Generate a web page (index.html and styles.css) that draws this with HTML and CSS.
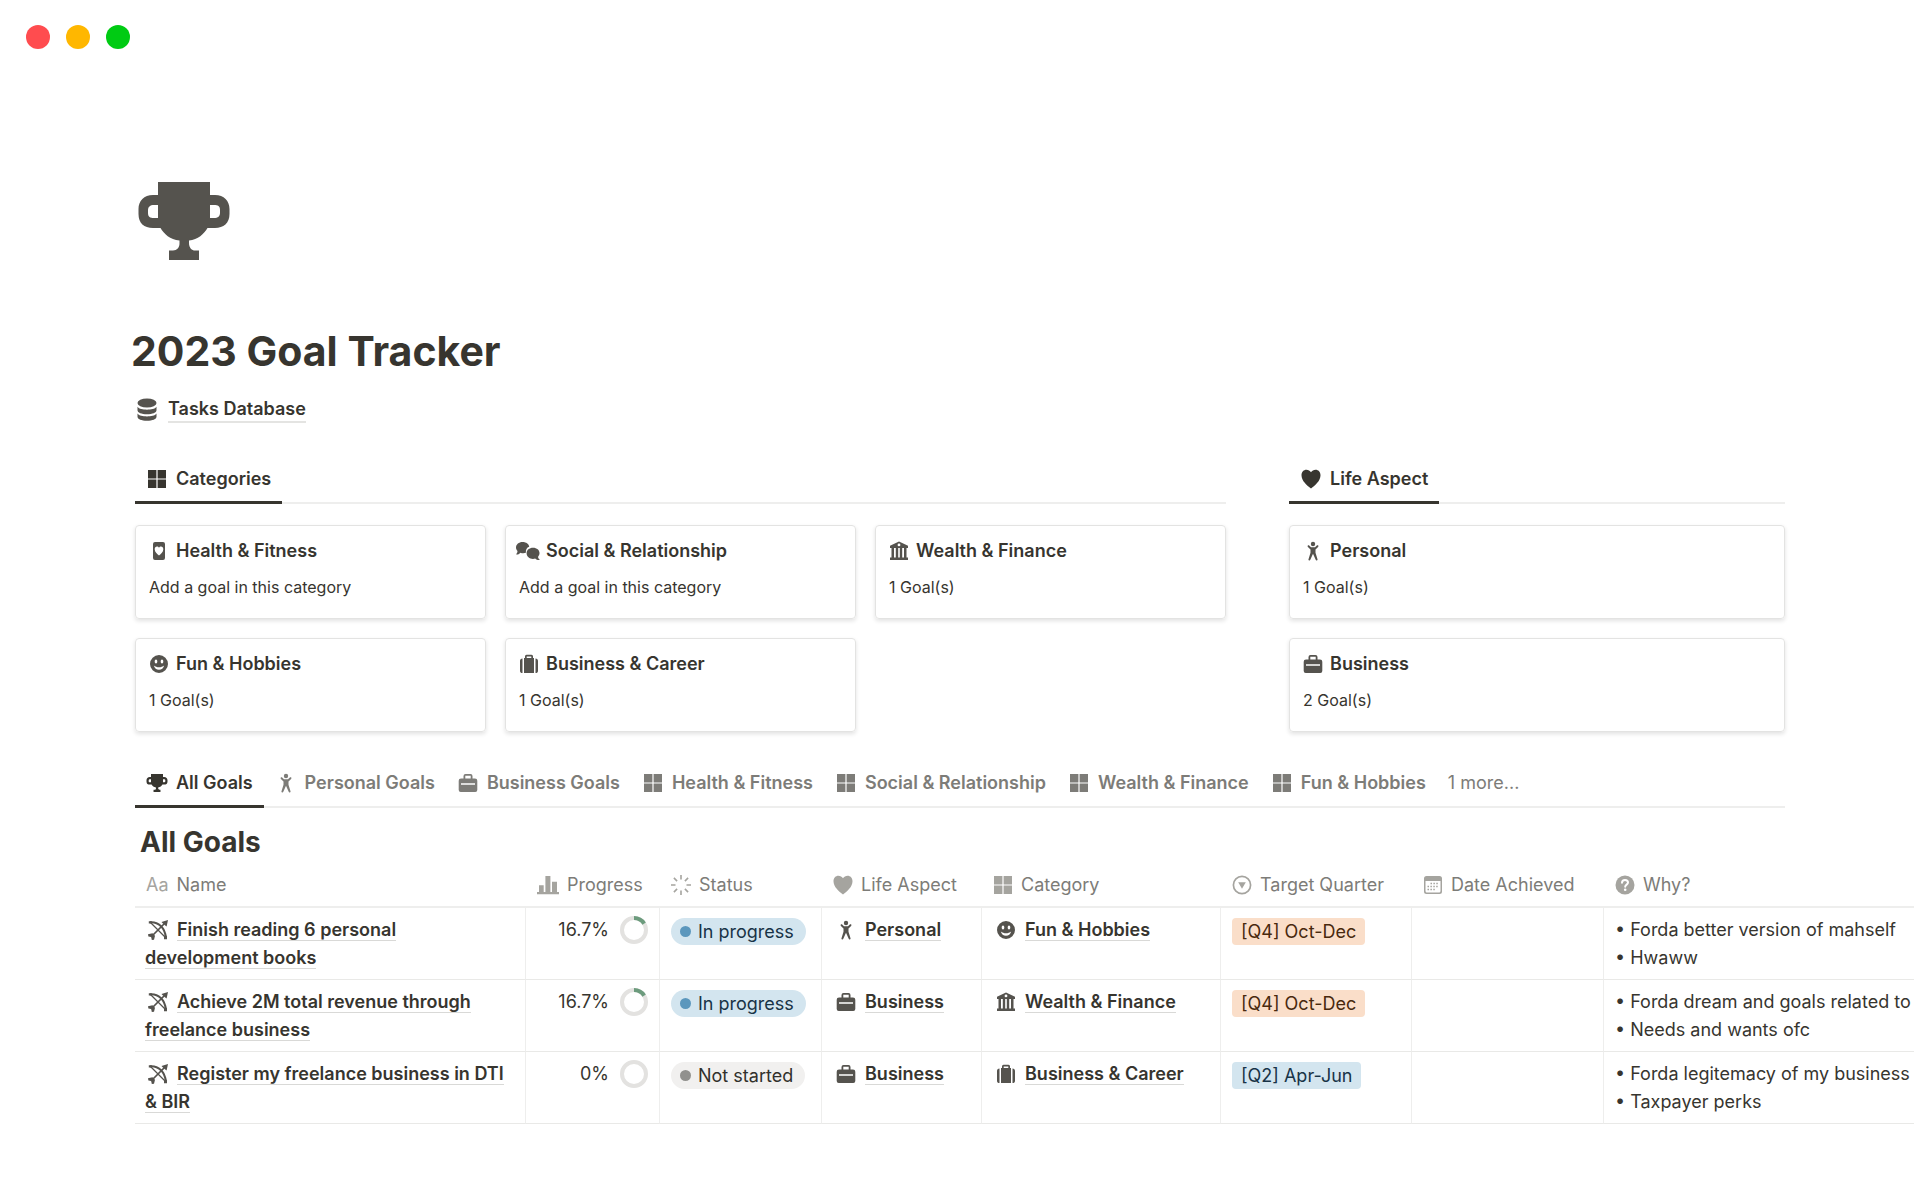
FILE: index.html
```html
<!DOCTYPE html>
<html lang="en">
<head>
  <meta charset="UTF-8" />
  <meta name="viewport" content="width=device-width, initial-scale=1.0"/>
  <title>2023 Goal Tracker</title>
  <link rel="stylesheet" href="styles.css">
</head>
<body>

<!-- Icon set -->
<svg class="sprite" aria-hidden="true">
  <symbol id="trophy" viewBox="0 0 104 104">
    <path fill-rule="evenodd" d="M26 13H78V26H83c9 0 14.500 6 14.500 14V45c0 9-6 14-14.500 14H75.500C72 65 66 70.500 57 71.500V74c0 5 3 7.500 6 7.500h4V91H37V81.500h4c4 0 6.500-3 6.500-7v-3C38 70.500 32 65 28.500 59H21C12 59 6.500 54 6.500 45V40C6.500 32 12 26 21 26H26ZM26 36H22c-4 0-6 2-6 5v3c0 4 2 5 6 5h4ZM78 36v13h4c4 0 6-2 6-5v-3c0-4-2-5-6-5Z"/>
  </symbol>
  <symbol id="database" viewBox="0 0 20 24">
    <ellipse cx="10" cy="5" rx="9.500" ry="4.500"/>
    <path d="M.5 8.800C2 11 6 11.700 10 11.700s8-.7 9.500-2.900v3.400c0 2.400-4 4-9.500 4s-9.500-1.600-9.500-4ZM.5 15.500c1.500 2.200 5.500 2.900 9.500 2.900s8-.7 9.500-2.900v3.200c0 2.400-4 4-9.500 4s-9.500-1.600-9.500-4Z"/>
  </symbol>
  <symbol id="grid" viewBox="0 0 20 20">
    <path d="M1 1h8.400v8.400H1ZM10.600 1H19v8.400h-8.400ZM1 10.600h8.400V19H1ZM10.600 10.600H19V19h-8.400Z"/>
  </symbol>
  <symbol id="heart" viewBox="0 0 20 20">
    <path d="M10 19.500C6 16.500.5 12 .5 6.300.5 3 2.700.8 5.400.8 7.300.8 9 1.700 10 3.300 11 1.700 12.700.8 14.600.8c2.700 0 4.900 2.200 4.900 5.500 0 5.700-5.500 10.200-9.500 13.200Z"/>
  </symbol>
  <symbol id="health" viewBox="0 0 20 20">
    <path fill-rule="evenodd" d="M6 1h8a2 2 0 0 1 2 2v14a2 2 0 0 1-2 2H6a2 2 0 0 1-2-2V3a2 2 0 0 1 2-2Zm4 13.600c2-1.600 4.300-3.700 4.300-6.400C14.300 6.600 13.300 5.500 12 5.500c-.8 0-1.600.4-2 1.200-.4-.8-1.200-1.200-2-1.200-1.300 0-2.300 1.100-2.300 2.700 0 2.700 2.300 4.800 4.300 6.400Z"/>
  </symbol>
  <symbol id="chat" viewBox="0 0 24 20">
    <path d="M6.500 1C10.400 1 13 3.200 13.200 5.700 10.700 6.500 9.600 8.700 9.900 11.800c-1.700.6-3.800.6-5.400-.1C3.300 13 2 13.500.7 13.600c-.6 0-.5-.5-.2-.8.700-.8 1-1.700 1-2.700C.5 9 0 7.900 0 6.600 0 3.400 2.900 1 6.500 1Z"/>
    <path d="M17 6.800c3.900 0 6.500 2.300 6.500 5.300 0 1.500-.5 2.600-1.400 3.600 0 1 .4 1.900 1.300 2.600.3.300.3.700-.2.800-1.500.1-2.800-.4-4-1.500-.7.200-1.400.3-2.200.3-3.600 0-6.400-2.400-6.400-5.700 0-3 2.700-5.400 6.400-5.400Z"/>
  </symbol>
  <symbol id="bank" viewBox="0 0 20 20">
    <path fill-rule="evenodd" d="M10 .5 19 4.800V7h-1.500v9.500H19V19H1v-2.500h1.500V7H1V4.800ZM10 2.500a1.400 1.400 0 1 0 0 2.800 1.400 1.400 0 0 0 0-2.800ZM5 7v9.500h1.800V7ZM9.200 7v9.500h1.600V7ZM13.200 7v9.500H15V7Z"/>
  </symbol>
  <symbol id="smile" viewBox="0 0 20 20">
    <path fill-rule="evenodd" d="M10 1a9 9 0 1 1 0 18 9 9 0 0 1 0-18ZM7 5.500c-.8 0-1.300.9-1.300 2s.5 2 1.300 2 1.300-.9 1.300-2-.5-2-1.300-2Zm6 0c-.8 0-1.300.9-1.300 2s.5 2 1.300 2 1.300-.9 1.300-2-.5-2-1.300-2ZM4.800 11.500c.7 2.700 2.700 4.300 5.200 4.300s4.500-1.600 5.200-4.300c-1.500 1.200-3.300 1.800-5.200 1.800s-3.700-.6-5.200-1.800Z"/>
  </symbol>
  <symbol id="suitcase" viewBox="0 0 20 20">
    <path fill-rule="evenodd" d="M7.500.8h5a1.500 1.500 0 0 1 1.500 1.500V4h1v15H5V4h1V2.300A1.500 1.500 0 0 1 7.500.8Zm.2 1.700V4h4.600V2.500Z"/>
    <path d="M3.500 4.500V19C1.800 19 1 18.200 1 16.700V7c0-1.600.8-2.500 2.500-2.500ZM16.500 4.500c1.700 0 2.500.9 2.500 2.500v9.700c0 1.500-.8 2.300-2.500 2.300Z"/>
  </symbol>
  <symbol id="briefcase" viewBox="0 0 20 20">
    <path fill-rule="evenodd" d="M7.500 1h5A2 2 0 0 1 14.500 3v2.500H17A2.300 2.300 0 0 1 19.300 7.800V17a2 2 0 0 1-2 2H2.700a2 2 0 0 1-2-2V7.800A2.300 2.300 0 0 1 3 5.500h2.500V3a2 2 0 0 1 2-2ZM7.300 2.800v2.700h5.400V2.800ZM3 10.300v1.400h14v-1.400Z"/>
  </symbol>
  <symbol id="person" viewBox="0 0 20 20">
    <circle cx="10" cy="3" r="2.200"/>
    <path d="M4.800 4.500c.4-.4 1-.3 1.400.1L8 6.200h4l1.800-1.600c.4-.4 1-.5 1.400-.1s.3 1-.1 1.400L12.500 8.500v3.300l2 6.400c.2.600-.1 1-.6 1.200-.6.100-1-.1-1.200-.6L10 12.800l-2.700 6c-.2.500-.6.700-1.200.6-.5-.2-.8-.6-.6-1.200l2-6.400V8.500L4.900 5.900c-.4-.4-.5-1-.1-1.400Z"/>
  </symbol>
  <symbol id="bow" viewBox="0 0 20 20">
    <path d="M2 2.200c8.500-.8 15 5.800 15.800 15" fill="none" stroke="currentColor" stroke-width="2"/>
    <path d="M2.500 2.500 17.500 17.500" fill="none" stroke="currentColor" stroke-width="1.300"/>
    <path d="M3 17 16 4" stroke="currentColor" stroke-width="1.700"/>
    <path d="M.8 1.200h3v2.200h-3ZM16 15.800h3v3.400h-3ZM20 0l-1.400 6.500-2-1.400-1.700-1.700L13.500 2ZM0 14.200l4.500-1L7 15.700l-1 4-2.200.3-.6-3L.4 16.500Z"/>
  </symbol>
  <symbol id="chart" viewBox="0 0 22 20">
    <path d="M0 17h22v2.200H0ZM2 10.300h4.700V17H2ZM8.400 1h5v16h-5ZM15 6.800h5V17h-5Z"/>
  </symbol>
  <symbol id="loader" viewBox="0 0 20 20">
    <path d="M10 0v4.500M10 15.500V20M0 10h4.500M15.500 10H20M2.900 2.900l3.200 3.200M13.900 13.900l3.200 3.200M2.900 17.100l3.200-3.200M13.900 6.100l3.200-3.200" fill="none" stroke="currentColor" stroke-width="1.600"/>
  </symbol>
  <symbol id="select" viewBox="0 0 20 20">
    <circle cx="10" cy="10" r="8.600" fill="none" stroke="currentColor" stroke-width="1.700"/>
    <path d="M6.200 7.300h7.600L10 13.700Z"/>
  </symbol>
  <symbol id="calendar" viewBox="0 0 20 20">
    <path fill-rule="evenodd" d="M3.500 1h13A2.500 2.500 0 0 1 19 3.500v13a2.500 2.500 0 0 1-2.500 2.500h-13A2.500 2.500 0 0 1 1 16.500v-13A2.500 2.500 0 0 1 3.500 1ZM2.500 6v10c0 .9.600 1.500 1.500 1.500h12c.9 0 1.500-.6 1.500-1.500V6Z"/>
    <path d="M7.500 8.500H16M4.500 11.500H16M4.500 14.500h8.500" fill="none" stroke="currentColor" stroke-width="1.500" stroke-dasharray="1.500 1.400"/>
  </symbol>
  <symbol id="question" viewBox="0 0 20 20">
    <circle cx="10" cy="10" r="9.500"/>
    <path d="M7 7.800C7 6 8.200 5 10 5s3 1 3 2.600c0 2-2.800 2.100-2.800 4.200" fill="none" stroke="#fff" stroke-width="2" stroke-linecap="round"/>
    <circle cx="10.200" cy="14.700" r="1.300" fill="#fff"/>
  </symbol>
</svg>

<header class="window-bar">
  <span class="dot red"></span>
  <span class="dot yellow"></span>
  <span class="dot green"></span>
</header>

<main class="page">
  <svg class="page-icon"><use href="#trophy"/></svg>
  <h1>2023 Goal Tracker</h1>
  <a class="page-link" href="#tasks"><svg class="db-icon"><use href="#database"/></svg><span>Tasks Database</span></a>

  <div class="columns">
    <section>
      <div class="tabs" role="tablist">
        <button class="tab active" role="tab" aria-selected="true"><svg class="icon"><use href="#grid"/></svg>Categories</button>
      </div>
      <div class="cards three">
        <a class="card" href="#health-fitness">
          <span class="card-title"><svg class="icon"><use href="#health"/></svg>Health &amp; Fitness</span>
          <span class="card-text">Add a goal in this category</span>
        </a>
        <a class="card" href="#social-relationship">
          <span class="card-title"><svg class="icon wide"><use href="#chat"/></svg>Social &amp; Relationship</span>
          <span class="card-text">Add a goal in this category</span>
        </a>
        <a class="card" href="#wealth-finance">
          <span class="card-title"><svg class="icon"><use href="#bank"/></svg>Wealth &amp; Finance</span>
          <span class="card-text">1 Goal(s)</span>
        </a>
        <a class="card" href="#fun-hobbies">
          <span class="card-title"><svg class="icon"><use href="#smile"/></svg>Fun &amp; Hobbies</span>
          <span class="card-text">1 Goal(s)</span>
        </a>
        <a class="card" href="#business-career">
          <span class="card-title"><svg class="icon"><use href="#suitcase"/></svg>Business &amp; Career</span>
          <span class="card-text">1 Goal(s)</span>
        </a>
      </div>
    </section>

    <section>
      <div class="tabs" role="tablist">
        <button class="tab active" role="tab" aria-selected="true"><svg class="icon"><use href="#heart"/></svg>Life Aspect</button>
      </div>
      <div class="cards">
        <a class="card" href="#personal">
          <span class="card-title"><svg class="icon"><use href="#person"/></svg>Personal</span>
          <span class="card-text">1 Goal(s)</span>
        </a>
        <a class="card" href="#business">
          <span class="card-title"><svg class="icon"><use href="#briefcase"/></svg>Business</span>
          <span class="card-text">2 Goal(s)</span>
        </a>
      </div>
    </section>
  </div>

  <div class="tabs goal-tabs" role="tablist">
    <button class="tab active" role="tab" aria-selected="true"><svg class="icon trophy"><use href="#trophy"/></svg>All Goals</button>
    <button class="tab" role="tab"><svg class="icon"><use href="#person"/></svg>Personal Goals</button>
    <button class="tab" role="tab"><svg class="icon"><use href="#briefcase"/></svg>Business Goals</button>
    <button class="tab" role="tab"><svg class="icon"><use href="#grid"/></svg>Health &amp; Fitness</button>
    <button class="tab" role="tab"><svg class="icon"><use href="#grid"/></svg>Social &amp; Relationship</button>
    <button class="tab" role="tab"><svg class="icon"><use href="#grid"/></svg>Wealth &amp; Finance</button>
    <button class="tab" role="tab"><svg class="icon"><use href="#grid"/></svg>Fun &amp; Hobbies</button>
    <button class="tab more">1 more...</button>
  </div>

  <h2>All Goals</h2>

  <div class="table-wrap">
    <table>
      <colgroup>
        <col class="col-name">
        <col class="col-progress">
        <col class="col-status">
        <col class="col-aspect">
        <col class="col-category">
        <col class="col-quarter">
        <col class="col-date">
        <col>
      </colgroup>
      <thead>
        <tr>
          <th><span class="head"><span class="aa">Aa</span>Name</span></th>
          <th><span class="head"><svg class="icon chart"><use href="#chart"/></svg>Progress</span></th>
          <th><span class="head"><svg class="icon"><use href="#loader"/></svg>Status</span></th>
          <th><span class="head"><svg class="icon"><use href="#heart"/></svg>Life Aspect</span></th>
          <th><span class="head"><svg class="icon"><use href="#grid"/></svg>Category</span></th>
          <th><span class="head"><svg class="icon"><use href="#select"/></svg>Target Quarter</span></th>
          <th><span class="head"><svg class="icon"><use href="#calendar"/></svg>Date Achieved</span></th>
          <th><span class="head"><svg class="icon"><use href="#question"/></svg>Why?</span></th>
        </tr>
      </thead>
      <tbody>
        <tr>
          <td class="name"><svg class="icon"><use href="#bow"/></svg><a href="#goal-1">Finish reading 6 personal development books</a></td>
          <td>
            <div class="progress">16.7%
              <svg class="ring" viewBox="0 0 28 28"><circle class="track" cx="14" cy="14" r="12"/><circle class="value" cx="14" cy="14" r="12" pathLength="100"/></svg>
            </div>
          </td>
          <td><span class="status blue">In progress</span></td>
          <td class="relation"><svg class="icon"><use href="#person"/></svg><a href="#personal">Personal</a></td>
          <td class="relation"><svg class="icon"><use href="#smile"/></svg><a href="#fun-hobbies">Fun &amp; Hobbies</a></td>
          <td><span class="tag orange">[Q4] Oct-Dec</span></td>
          <td></td>
          <td class="why">• Forda better version of mahself<br>• Hwaww</td>
        </tr>
        <tr>
          <td class="name"><svg class="icon"><use href="#bow"/></svg><a href="#goal-2">Achieve 2M total revenue through freelance business</a></td>
          <td>
            <div class="progress">16.7%
              <svg class="ring" viewBox="0 0 28 28"><circle class="track" cx="14" cy="14" r="12"/><circle class="value" cx="14" cy="14" r="12" pathLength="100"/></svg>
            </div>
          </td>
          <td><span class="status blue">In progress</span></td>
          <td class="relation"><svg class="icon"><use href="#briefcase"/></svg><a href="#business">Business</a></td>
          <td class="relation"><svg class="icon"><use href="#bank"/></svg><a href="#wealth-finance">Wealth &amp; Finance</a></td>
          <td><span class="tag orange">[Q4] Oct-Dec</span></td>
          <td></td>
          <td class="why">• Forda dream and goals related to<br>• Needs and wants ofc</td>
        </tr>
        <tr>
          <td class="name"><svg class="icon"><use href="#bow"/></svg><a href="#goal-3">Register my freelance business in DTI &amp; BIR</a></td>
          <td>
            <div class="progress">0%
              <svg class="ring" viewBox="0 0 28 28"><circle class="track" cx="14" cy="14" r="12"/></svg>
            </div>
          </td>
          <td><span class="status gray">Not started</span></td>
          <td class="relation"><svg class="icon"><use href="#briefcase"/></svg><a href="#business">Business</a></td>
          <td class="relation"><svg class="icon"><use href="#suitcase"/></svg><a href="#business-career">Business &amp; Career</a></td>
          <td><span class="tag sky">[Q2] Apr-Jun</span></td>
          <td></td>
          <td class="why">• Forda legitemacy of my business<br>• Taxpayer perks</td>
        </tr>
      </tbody>
    </table>
  </div>
</main>

</body>
</html>
```
FILE: styles.css
```css
* {
  box-sizing: border-box;
}

body {
  margin: 0;
  background: #fff;
  color: #37352f;
  font-family: Inter, "Liberation Sans", sans-serif;
  font-size: 18px;
  line-height: 28px;
}

a {
  color: inherit;
  text-decoration: none;
}

svg {
  fill: currentColor;
}

.sprite {
  display: none;
}

.window-bar {
  display: flex;
  gap: 16px;
  padding: 25px 26px 0;
}

.dot {
  width: 24px;
  height: 24px;
  border-radius: 50%;
}

.red {
  background: #ff4c4f;
}

.yellow {
  background: #ffb700;
}

.green {
  background: #00cb13;
}

.page {
  padding: 120px 135px 60px;
}

.page-icon {
  display: block;
  width: 104px;
  height: 104px;
  margin-left: -3px;
  color: #55534e;
}

h1 {
  margin: 52px 0 20px -4px;
  font-size: 41px;
  line-height: 52px;
  font-weight: 700;
}

.page-link {
  display: flex;
  align-items: center;
  gap: 11px;
  width: fit-content;
  font-weight: 600;
}

.page-link span {
  line-height: 24px;
  border-bottom: 2px solid #e4e4e2;
}

.db-icon {
  width: 20px;
  height: 24px;
  margin-left: 2px;
  color: #55534e;
}

.icon {
  flex: none;
  width: 20px;
  height: 20px;
}

/* Galleries */
.columns {
  display: grid;
  grid-template-columns: 2.2fr 1fr;
  gap: 63px;
  margin: 33px 0 28px;
}

.tabs {
  display: flex;
  border-bottom: 2px solid #eeeeed;
}

.tab {
  display: flex;
  align-items: center;
  gap: 8px;
  height: 48px;
  margin-bottom: -2px;
  padding: 0 11px;
  border: none;
  border-bottom: 3px solid transparent;
  background: none;
  color: #7d7c78;
  font: inherit;
  font-weight: 600;
  white-space: nowrap;
  cursor: pointer;
}

.tab .icon {
  margin: 0 1px;
}

.tab.active {
  color: #37352f;
  border-bottom-color: #37352f;
}

.tab.more {
  font-weight: 400;
}

.tab .trophy {
  width: 24px;
  height: 24px;
  margin: 0 -1px;
}

.cards {
  display: grid;
  gap: 19px;
  margin-top: 21px;
}

.cards.three {
  grid-template-columns: repeat(3, 1fr);
}

.card {
  display: flex;
  flex-direction: column;
  gap: 10px;
  padding: 11px 13px 19px;
  border: 1px solid #e3e3e2;
  border-radius: 4px;
  box-shadow: 0 2px 4px rgba(15, 15, 15, 0.12);
}

.card-title {
  display: flex;
  align-items: center;
  gap: 7px;
  font-weight: 600;
}

.card-title .icon {
  color: #55534e;
}

.icon.wide {
  width: 24px;
  margin: 0 -1px 0 -3px;
}

.card-text {
  font-size: 16px;
  line-height: 24px;
}

h2 {
  margin: 16px 0 3px 5px;
  font-size: 28px;
  line-height: 36px;
  font-weight: 700;
}

/* Goals table, runs past the right edge of the page column */
.table-wrap {
  margin-right: -129px;
  overflow: hidden;
}

table {
  width: 100%;
  table-layout: fixed;
  border-collapse: separate;
  border-spacing: 0;
}

.col-name {
  width: 391px;
}

.col-progress {
  width: 134px;
}

.col-status {
  width: 162px;
}

.col-aspect {
  width: 160px;
}

.col-category {
  width: 239px;
}

.col-quarter {
  width: 191px;
}

.col-date {
  width: 192px;
}

th {
  height: 45px;
  padding: 0 11px;
  border-bottom: 2px solid #eeeeed;
  color: #7d7c78;
  font-weight: 400;
  text-align: left;
}

.head {
  display: flex;
  align-items: center;
  gap: 8px;
  white-space: nowrap;
}

.head .icon,
.aa {
  color: #a5a49f;
}

.head .chart {
  width: 22px;
}

td {
  height: 72px;
  padding: 8px 11px 7px;
  border-right: 1px solid #eeeeed;
  border-bottom: 1px solid #e9e9e7;
  vertical-align: top;
}

td:last-child {
  border-right: none;
}

td a {
  border-bottom: 1px solid #d9d9d7;
  font-weight: 600;
}

td .icon {
  margin-right: 9px;
  color: #55534e;
  vertical-align: -4px;
}

.name {
  padding-left: 10px;
  padding-right: 14px;
}

.name .icon {
  margin-left: 3px;
}

.relation {
  padding-left: 14px;
}

.progress {
  display: flex;
  align-items: center;
  justify-content: flex-end;
  gap: 11px;
}

.ring {
  width: 28px;
  height: 28px;
}

.ring circle {
  fill: none;
  stroke: #e3e2e0;
  stroke-width: 4;
}

.ring .value {
  stroke: #6c9b7d;
  stroke-dasharray: 16 84;
  transform: rotate(-90deg);
  transform-origin: center;
}

.status {
  display: inline-flex;
  align-items: center;
  gap: 7px;
  margin-top: 2px;
  padding: 0 12px 0 9px;
  border-radius: 14px;
  line-height: 27px;
}

.status::before {
  content: "";
  width: 11px;
  height: 11px;
  border-radius: 50%;
}

.status.blue {
  background: #d3e5ef;
  color: #183347;
}

.status.blue::before {
  background: #5b97bd;
}

.status.gray {
  background: #f1f0ef;
  color: #32302c;
}

.status.gray::before {
  background: #91918e;
}

.tag {
  display: inline-block;
  margin-top: 2px;
  padding: 0 9px;
  border-radius: 4px;
  line-height: 27px;
}

.orange {
  background: #fadec9;
  color: #49290e;
}

.sky {
  background: #d3e5ef;
  color: #183347;
}

.why {
  white-space: nowrap;
}
```
